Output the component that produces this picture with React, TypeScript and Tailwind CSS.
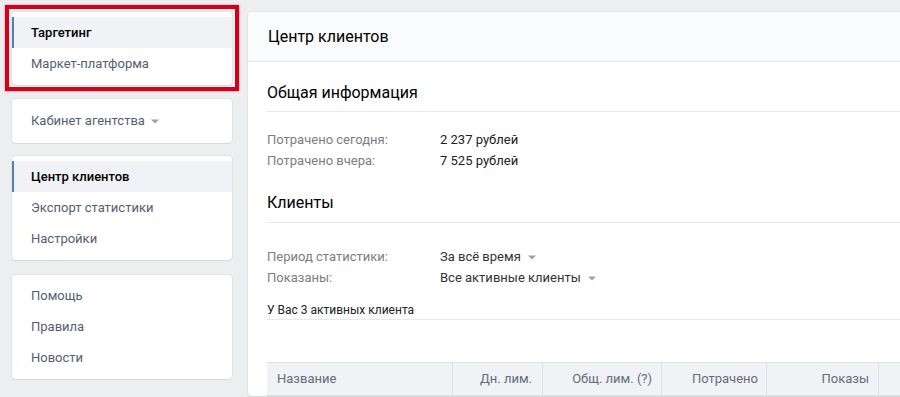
import type { ReactNode } from 'react';

const font = { fontFamily: 'Roboto, "Open Sans", Arial, sans-serif' };

type MenuItem = { label: string; active?: boolean; caret?: boolean };

const Caret = ({ className = '' }: { className?: string }) => (
  <svg width="8" height="5" viewBox="0 0 8 5" className={className}>
    <path d="M0 0.5h8L4 4.5z" fill="#9aa2ac" />
  </svg>
);

function MenuCard({ items, children }: { items: MenuItem[]; children?: ReactNode }) {
  return (
    <div className="relative rounded-[4px] bg-white pt-[5px] pb-[6px] shadow-[0_1px_0_0_#d7d8db,0_0_0_1px_#e3e4e8]">
      {items.map((item) => (
        <div
          key={item.label}
          className={`flex h-[31px] items-center border-l-2 pl-[17px] text-[13px] ${
            item.active
              ? 'border-[#5181b8] bg-[#f0f2f5] font-medium text-[#000]'
              : 'border-transparent text-[#55606e]'
          }`}
        >
          {item.label}
          {item.caret && <Caret className="ml-[6px] mt-[1px]" />}
        </div>
      ))}
      {children}
    </div>
  );
}

const columns = [
  { label: 'Название', width: 'w-[186px]', align: 'justify-start pl-[10px]' },
  { label: 'Дн. лим.', width: 'w-[90px]', align: 'justify-end pr-[10px]' },
  { label: 'Общ. лим. (?)', width: 'w-[119px]', align: 'justify-end pr-[9px]' },
  { label: 'Потрачено', width: 'w-[105px]', align: 'justify-end pr-[8px]' },
  { label: 'Показы', width: 'w-[112px]', align: 'justify-end pr-[9px]' },
  { label: '', width: 'w-[100px]', align: 'justify-end pr-[9px]' },
];

export default function App() {
  return (
    <div className="h-[397px] w-full overflow-hidden bg-[#edeef0]" style={font}>
      <div className="flex gap-[16px] px-[12px] pt-[12px]">
        <div className="flex w-[220px] shrink-0 flex-col">
          <MenuCard items={[{ label: 'Таргетинг', active: true }, { label: 'Маркет-платформа' }]}>
            <div className="pointer-events-none absolute -top-[7px] -right-[7px] -bottom-[6px] -left-[7px] border-[4px] border-[#d4001a] shadow-[0_0_2px_rgba(212,0,26,0.5)]" />
          </MenuCard>
          <div className="mt-[14px]">
            <div className="flex h-[44px] items-center rounded-[4px] bg-white pl-[19px] text-[13px] text-[#55606e] shadow-[0_1px_0_0_#d7d8db,0_0_0_1px_#e3e4e8]">
              Кабинет агентства
              <Caret className="ml-[6px] mt-[1px]" />
            </div>
          </div>
          <div className="mt-[13px]">
            <MenuCard
              items={[
                { label: 'Центр клиентов', active: true },
                { label: 'Экспорт статистики' },
                { label: 'Настройки' },
              ]}
            />
          </div>
          <div className="mt-[15px]">
            <MenuCard items={[{ label: 'Помощь' }, { label: 'Правила' }, { label: 'Новости' }]} />
          </div>
        </div>

        <div className="w-[760px] shrink-0 rounded-[4px] bg-white shadow-[0_1px_0_0_#d7d8db,0_0_0_1px_#e3e4e8]">
          <div className="flex h-[50px] items-center rounded-t-[4px] border-b border-[#e7e8ec] bg-[#fafbfc] px-[20px] text-[16px] text-[#000]">
            Центр клиентов
          </div>

          <div className="pl-[19px]">
            <div className="flex h-[50px] items-end border-b border-[#e7e8ec] pb-[6px] text-[16px] text-[#000]">
              Общая информация
            </div>
            <div className="pt-[17px] text-[13px] leading-[21px]">
              <div className="flex">
                <div className="w-[173px] text-[#7d7d7d]">Потрачено сегодня:</div>
                <div className="text-[#222]">2 237 рублей</div>
              </div>
              <div className="flex">
                <div className="w-[173px] text-[#7d7d7d]">Потрачено вчера:</div>
                <div className="text-[#222]">7 525 рублей</div>
              </div>
            </div>

            <div className="flex h-[52px] items-end border-b border-[#e7e8ec] pb-[7px] text-[16px] text-[#000]">
              Клиенты
            </div>
            <div className="pt-[23px] text-[13px] leading-[21px]">
              <div className="flex">
                <div className="w-[173px] text-[#7d7d7d]">Период статистики:</div>
                <div className="flex items-center text-[#333]">
                  За всё время
                  <Caret className="ml-[7px] mt-[1px]" />
                </div>
              </div>
              <div className="flex">
                <div className="w-[173px] text-[#7d7d7d]">Показаны:</div>
                <div className="flex items-center text-[#333]">
                  Все активные клиенты
                  <Caret className="ml-[7px] mt-[1px]" />
                </div>
              </div>
            </div>
            <div className="mt-[14px] border-b border-[#e7e8ec] pb-[1px] text-[12px] leading-[16px] text-[#222]">
              У Вас 3 активных клиента
            </div>

            <div className="mt-[42px] flex h-[34px] border-y border-[#dce1e6] bg-[#f0f2f5] text-[13px] text-[#656d78]">
              {columns.map((col, index) => (
                <div
                  key={index}
                  className={`flex h-full shrink-0 items-center ${col.width} ${col.align} ${
                    index < columns.length - 1 ? 'border-r border-[#dce1e6]' : ''
                  }`}
                >
                  {col.label}
                </div>
              ))}
            </div>
          </div>
        </div>
      </div>
    </div>
  );
}
